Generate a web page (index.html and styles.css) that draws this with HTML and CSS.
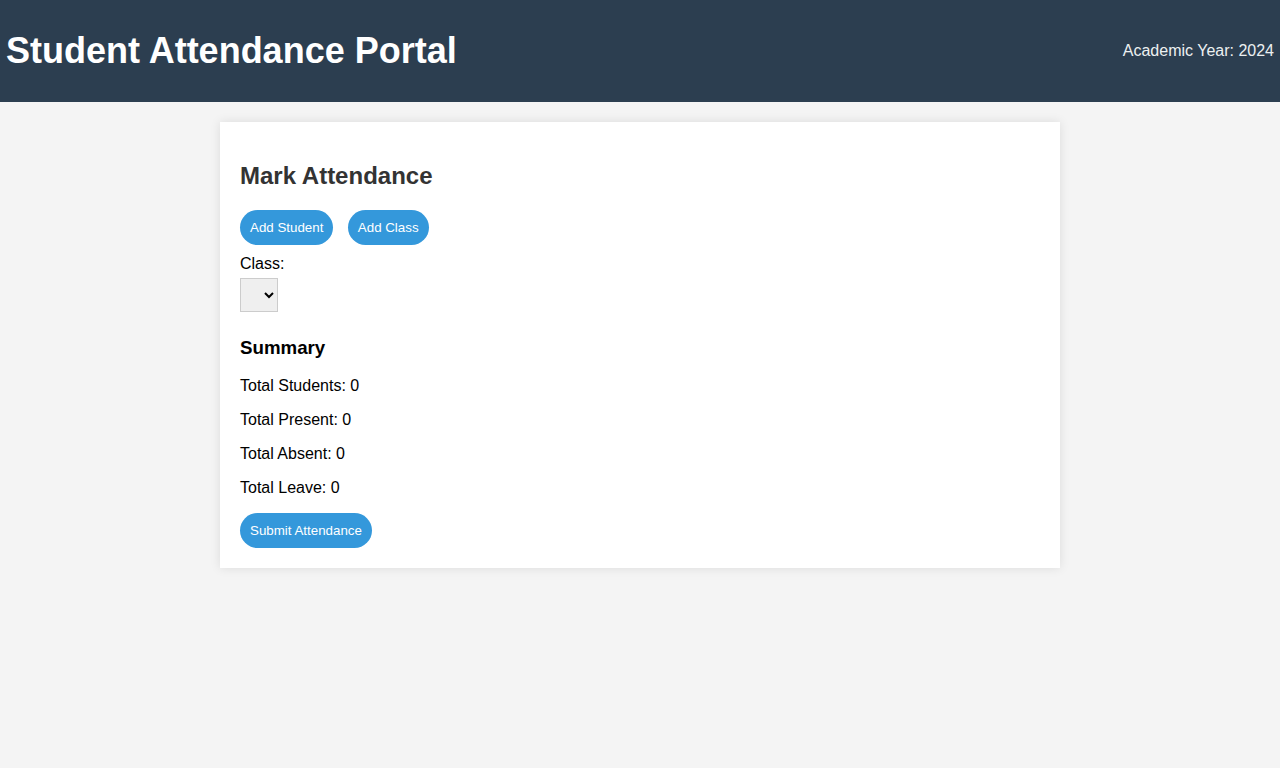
FILE: index.html
```
<!DOCTYPE html>
<html lang="en">
<head>
<meta charset="UTF-8">
<title>Student Attendance Portal</title>
<link rel="stylesheet" href="styles.css">
</head>
<body>
<header class="site-header">
  <h1 class="site-title">Student Attendance Portal</h1>
  <div class="year">Academic Year: 2024</div>
</header>
<main class="card">
  <h2 class="card-title">Mark Attendance</h2>
  <div class="actions">
    <button class="btn">Add Student</button>
    <button class="btn">Add Class</button>
  </div>
  <div class="field">
    <label class="field-label" for="cls">Class:</label>
    <select id="cls" class="field-select"><option></option></select>
  </div>
  <section class="summary">
    <h3 class="summary-title">Summary</h3>
    <p class="stat">Total Students: 0</p>
    <p class="stat">Total Present: 0</p>
    <p class="stat">Total Absent: 0</p>
    <p class="stat">Total Leave: 0</p>
    <button class="btn">Submit Attendance</button>
  </section>
</main>
</body>
</html>
```
FILE: styles.css
```
html, body {
  margin: 0;
  padding: 0;
}
body {
  font-family: "Liberation Sans", Arial, sans-serif;
  background: #f4f4f4;
  color: #000;
}
.site-header {
  background: #2c3e50;
  color: #fff;
  display: flex;
  justify-content: space-between;
  align-items: center;
  padding: 6px 6px;
}
.site-title {
  font-size: 36px;
  margin: 24px 0;
}
.year {
  font-size: 16px;
  color: #ecf0f1;
}
.card {
  display: block;
  width: 800px;
  margin: 20px auto;
  background: #fff;
  padding: 20px;
  box-shadow: 0 0 10px rgba(0, 0, 0, 0.1);
}
.card-title {
  font-size: 24px;
  color: #333;
  margin: 20px 0;
}
.actions {
  margin-bottom: 10px;
}
.btn {
  font-family: "Liberation Sans", Arial, sans-serif;
  font-size: 13.333px;
  background: #3498db;
  color: #fff;
  border: none;
  border-radius: 20px;
  padding: 10px;
  margin-right: 10px;
  cursor: pointer;
}
.field-label {
  display: block;
  font-size: 16px;
  margin-bottom: 5px;
}
.field-select {
  display: block;
  width: 38px;
  height: 34px;
  background: #efefef;
  border: 1px solid #ccc;
  font-size: 13.333px;
}
.summary-title {
  font-size: 18.72px;
  margin: 25px 0 17.72px;
}
.stat {
  font-size: 16px;
  margin: 16px 0;
}
```
